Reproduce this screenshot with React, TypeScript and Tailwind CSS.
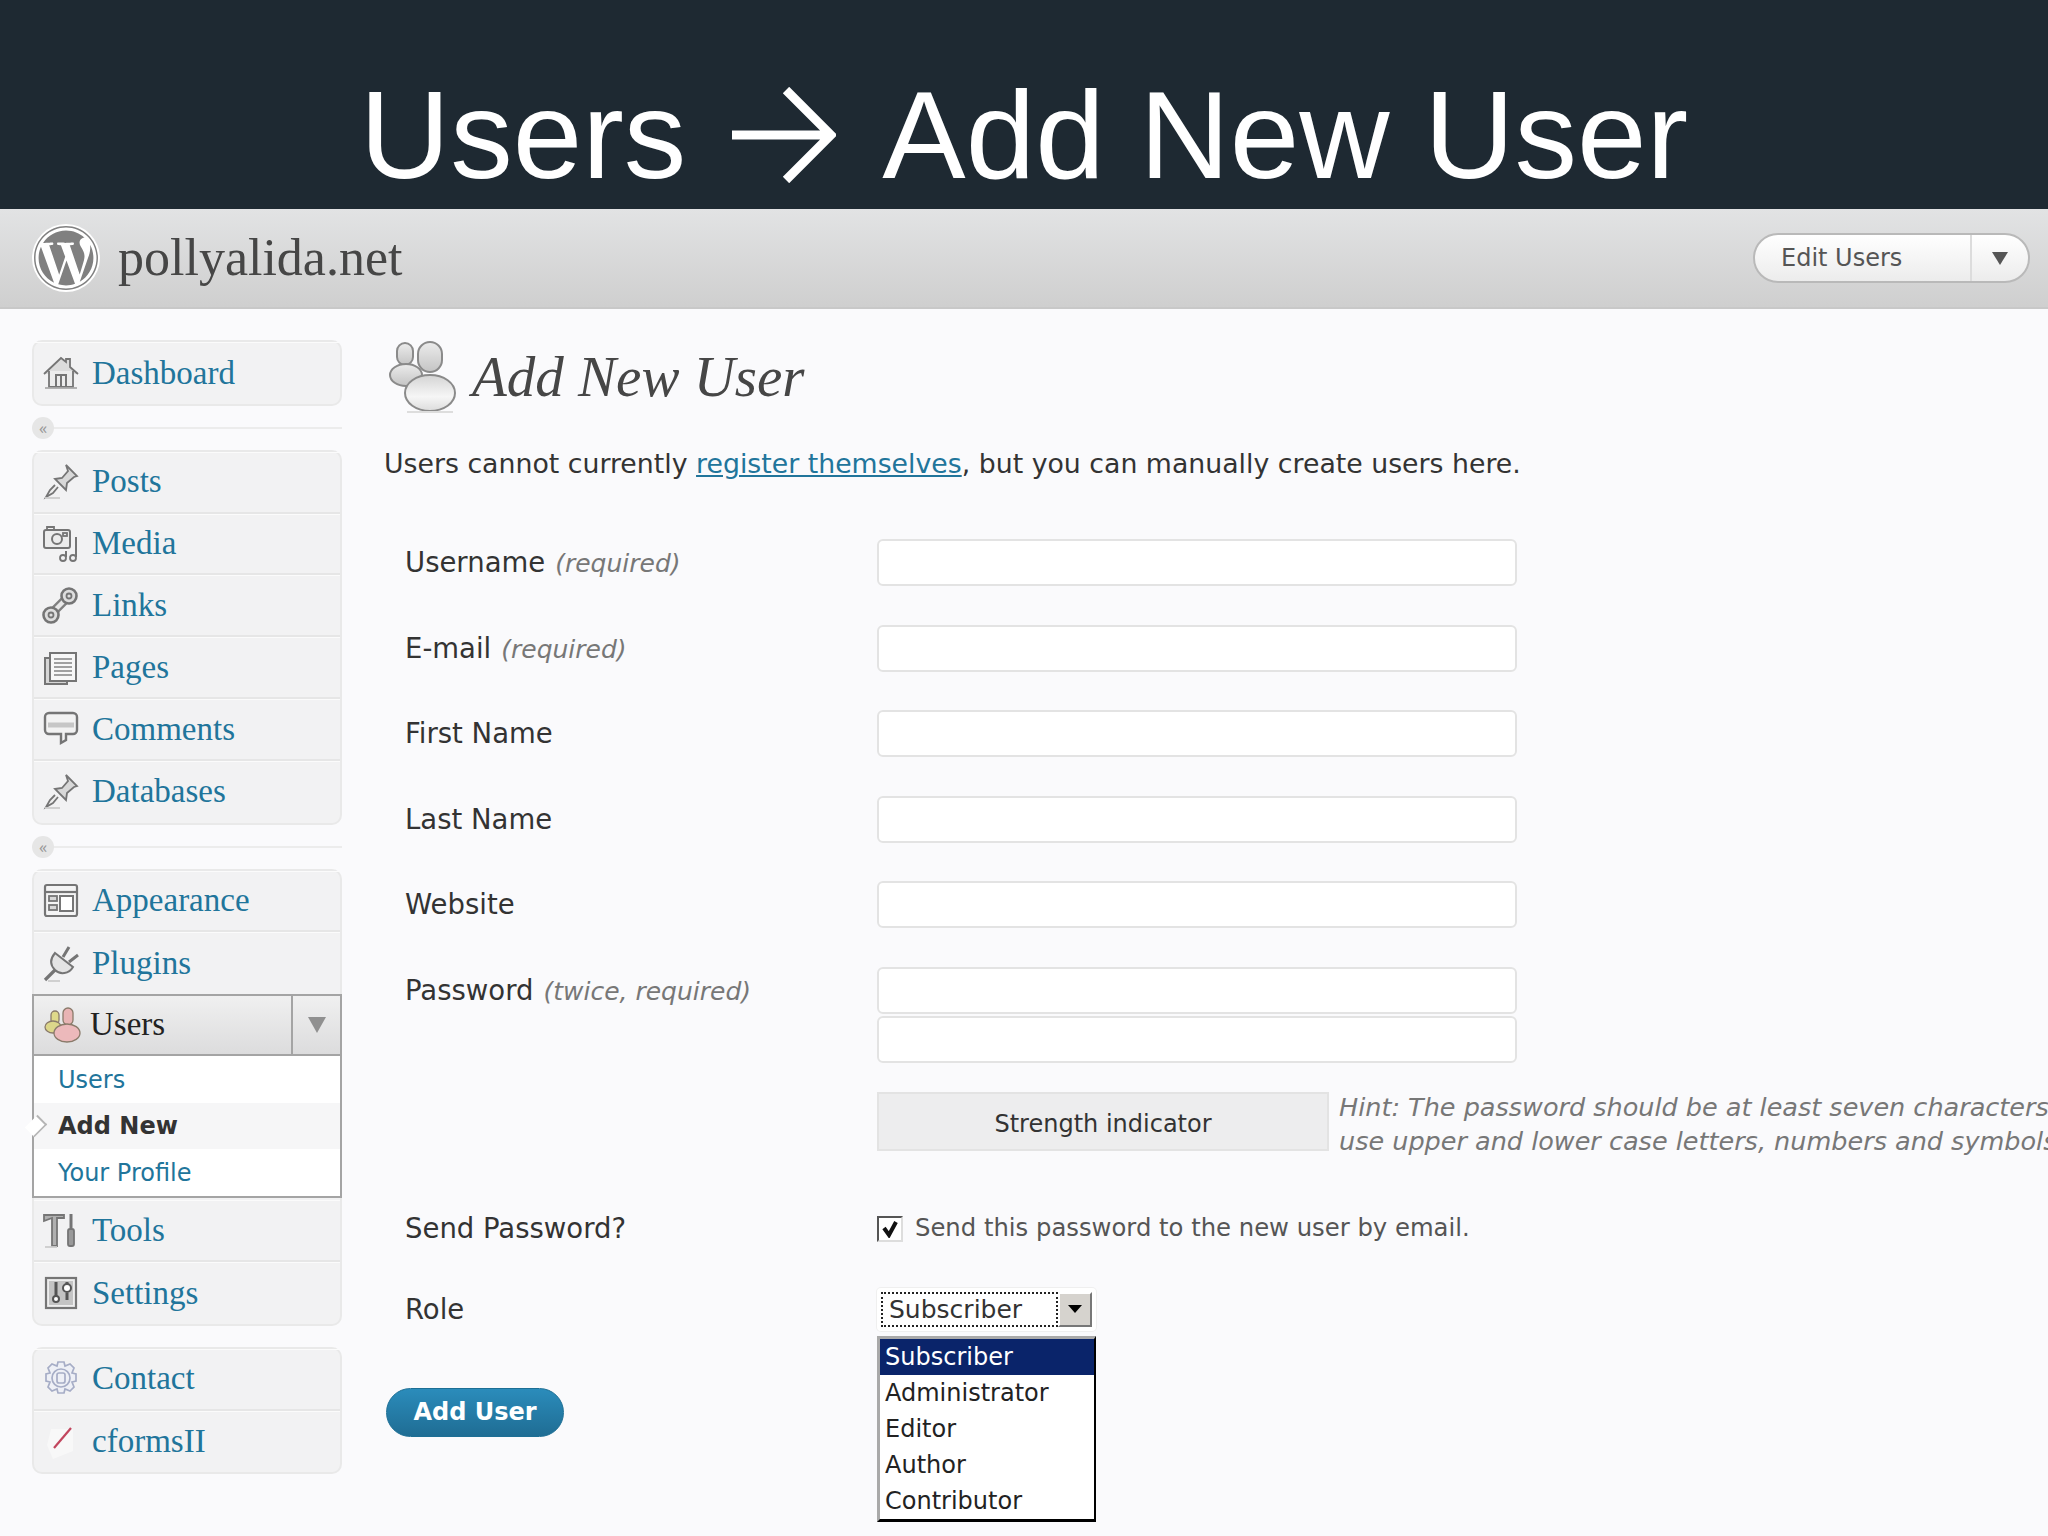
import { ReactNode } from 'react'
import { FaWordpress } from 'react-icons/fa'

const serif = "font-['Liberation_Serif',serif]"

// sidebar icons, all on a 38 box
function Ico({ children }: { children: ReactNode }) {
  return (
    <svg width="38" height="38" viewBox="0 0 38 38" fill="none" stroke="#757575" strokeWidth="1.8" className="shrink-0">
      {children}
    </svg>
  )
}

const HomeIco = () => (
  <Ico>
    <path d="M2 20 19 4l5 4V5h4v8l8 7" fill="#dcdcdc" />
    <path d="M7 17v16h24V17" fill="#ececec" />
    <path d="M14 33V21h10v12M19 21v12" strokeWidth="2" />
    <path d="M3 34h32" stroke="#aaa" />
  </Ico>
)
const PinIco = () => (
  <Ico>
    <path d="M24 2l11 11-3 1-7 6-1 7-11-11 7-1 6-7z" fill="#d8d8d8" />
    <path d="M16 24l-5 6-7 4 4-7 5-5" fill="#eee" />
    <path d="M3 35h15" stroke="#ccc" />
  </Ico>
)
const MediaIco = () => (
  <Ico>
    <rect x="2" y="5" width="26" height="18" rx="2" fill="#ececec" strokeWidth="2" />
    <path d="M5 5V2h7v3" />
    <circle cx="15" cy="14" r="5" strokeWidth="2" />
    <rect x="21" y="8" width="4" height="3" />
    <path d="M24 26v6M34 12v20" strokeWidth="2" />
    <circle cx="21" cy="33" r="3" />
    <circle cx="31" cy="33" r="3" />
  </Ico>
)
const LinkIco = () => (
  <Ico>
    <path d="M11 25 25 11" strokeWidth="9" stroke="#808080" />
    <path d="M11 25 25 11" strokeWidth="4.5" stroke="#e8e8e8" />
    <circle cx="27" cy="9" r="7.5" fill="#dedede" strokeWidth="2.6" />
    <circle cx="27" cy="9" r="2.5" />
    <circle cx="9" cy="28" r="7.5" fill="#dedede" strokeWidth="2.6" />
    <circle cx="9" cy="28" r="2.5" />
  </Ico>
)
const PagesIco = () => (
  <Ico>
    <rect x="3" y="9" width="22" height="26" fill="#d6d6d6" strokeWidth="2" />
    <rect x="8" y="4" width="26" height="28" fill="#f7f7f7" strokeWidth="2" />
    <path d="M12 10h18M12 14h18M12 18h18M12 22h18M12 26h18" stroke="#a0a0a0" />
  </Ico>
)
const CommentIco = () => (
  <Ico>
    <path d="M7 3h24a4 4 0 0 1 4 4v13a4 4 0 0 1-4 4h-7v6l-5 3v-9H7a4 4 0 0 1-4-4V7a4 4 0 0 1 4-4z" fill="#f2f2f2" strokeWidth="2.4" />
    <path d="M6 15h26" stroke="#c6c6c6" strokeWidth="5" />
  </Ico>
)
const AppearanceIco = () => (
  <Ico>
    <rect x="3" y="3" width="32" height="31" rx="2" fill="#f4f4f4" strokeWidth="2.2" />
    <path d="M3 10h32" strokeWidth="2.2" />
    <rect x="7" y="14" width="8" height="5" fill="#d8d8d8" />
    <rect x="7" y="23" width="8" height="5" fill="#d8d8d8" />
    <rect x="18" y="14" width="13" height="15" fill="#fff" strokeWidth="2" />
  </Ico>
)
const PluginIco = () => (
  <Ico>
    <path d="M13 8 31 22c-4 7-13 8-18 3S8 14 13 8z" fill="#e4e4e4" strokeWidth="2" />
    <path d="M21 12l6-10M27 17l9-7" strokeWidth="3" />
    <path d="M13 25 3 35" strokeWidth="3.2" />
    <path d="M6 36h12" stroke="#ccc" />
  </Ico>
)
const UsersIco = () => (
  <svg width="38" height="38" viewBox="0 0 38 38" className="shrink-0" stroke="#8a7a6a" strokeWidth="1.3">
    <rect x="7" y="5" width="8" height="13" rx="4" fill="#dfd98a" />
    <ellipse cx="9" cy="21" rx="8" ry="6" fill="#dcd68a" />
    <rect x="19" y="2" width="10" height="17" rx="5" fill="#e8b4b4" />
    <ellipse cx="23" cy="27" rx="13" ry="9" fill="#ecb9bb" />
  </svg>
)
const ToolsIco = () => (
  <Ico>
    <path d="M2 3h20v3H15v28H10V6L2 9z" fill="#b0b0b0" />
    <path d="M29 2v14" strokeWidth="3" />
    <rect x="26" y="17" width="6" height="17" rx="2" fill="#999" />
    <path d="M3 35h12" stroke="#ccc" />
  </Ico>
)
const SettingsIco = () => (
  <Ico>
    <rect x="4" y="4" width="30" height="30" fill="#eee" strokeWidth="2.2" />
    <rect x="7" y="7" width="24" height="24" fill="#c4c4c4" stroke="none" />
    <path d="M14 8v14M25 8v3M25 19v7" strokeWidth="3" stroke="#555" />
    <circle cx="14" cy="25" r="3" fill="#fff" stroke="#555" strokeWidth="2" />
    <circle cx="25" cy="14" r="4" fill="#fff" stroke="#555" strokeWidth="2" />
  </Ico>
)
const ContactIco = () => (
  <svg width="38" height="38" viewBox="0 0 38 38" fill="none" stroke="#a6adc6" strokeWidth="1.7" className="shrink-0">
    <path d="M16 2h6l1 4 5-2 4 4-2 5 4 1v7l-4 1 2 5-4 4-5-2-1 4h-6l-1-4-5 2-4-4 2-5-4-1v-7l4-1-2-5 4-4 5 2z" fill="#eef0f6" />
    <circle cx="19" cy="18" r="9" />
    <rect x="15" y="13" width="8" height="10" rx="2" />
  </svg>
)
const CformsIco = () => (
  <svg width="38" height="38" viewBox="0 0 38 38" fill="none" className="shrink-0">
    <path d="M9 6h22v22l-20 8-6-14z" fill="#f8f8f8" />
    <path d="M12 25 29 5" stroke="#c2465e" strokeWidth="2.2" />
  </svg>
)

function MenuRow({ icon, label, last }: { icon: ReactNode; label: string; last?: boolean }) {
  return (
    <div className={`flex h-[61.8px] items-center gap-[12px] pl-[8px] border-t border-t-[#fbfbfb] ${last ? '' : 'border-b-2 border-b-[#e6e6e6]'}`}>
      {icon}
      <span className={`${serif} text-[33px] text-[#21759b]`}>{label}</span>
    </div>
  )
}

function MenuGroup({ children }: { children: ReactNode }) {
  return <div className="rounded-[10px] border-2 border-[#e9e9e9] bg-[#f2f2f3]">{children}</div>
}

function Separator() {
  return (
    <div className="flex h-[44px] items-center">
      <div className="flex h-[22px] w-[22px] items-center justify-center rounded-full bg-[#e6e6e6] text-[16px] leading-none text-[#999]">«</div>
      <div className="h-[2px] flex-1 bg-[#ececec]" />
    </div>
  )
}

function Sidebar() {
  return (
    <aside className="ml-[32px] mt-[31px] w-[310px] shrink-0">
      <MenuGroup>
        <MenuRow icon={<HomeIco />} label="Dashboard" last />
      </MenuGroup>
      <Separator />
      <MenuGroup>
        <MenuRow icon={<PinIco />} label="Posts" />
        <MenuRow icon={<MediaIco />} label="Media" />
        <MenuRow icon={<LinkIco />} label="Links" />
        <MenuRow icon={<PagesIco />} label="Pages" />
        <MenuRow icon={<CommentIco />} label="Comments" />
        <MenuRow icon={<PinIco />} label="Databases" last />
      </MenuGroup>
      <Separator />
      <MenuGroup>
        <MenuRow icon={<AppearanceIco />} label="Appearance" />
        <MenuRow icon={<PluginIco />} label="Plugins" last />
        <div className="-mx-[2px] flex h-[62px] border-2 border-[#a4a4a4] bg-gradient-to-b from-[#f0f0f0] to-[#dcdcdd]">
          <div className="flex flex-1 items-center gap-[8px] border-r-2 border-r-[#a4a4a4] pl-[10px]">
            <UsersIco />
            <span className={`${serif} text-[33px] text-[#222]`}>Users</span>
          </div>
          <div className="flex w-[47px] items-center justify-center">
            <div className="h-0 w-0 border-x-[9px] border-t-[16px] border-x-transparent border-t-[#909090]" />
          </div>
        </div>
        <div className="-mx-[2px] border-x-2 border-b-2 border-[#a4a4a4] bg-white font-['DejaVu_Sans',sans-serif] text-[24px]">
          <div className="flex h-[47px] items-center pl-[24px] text-[#21759b]">Users</div>
          <div className="relative flex h-[46px] items-center bg-[#f6f6f7] pl-[24px] font-bold text-[#333]">
            Add New
            <div className="absolute -left-[7px] top-[14px] h-[18px] w-[18px] rotate-45 scale-x-75 border-r-2 border-t-2 border-[#b5b5b5] bg-white" />
          </div>
          <div className="flex h-[47px] items-center pl-[24px] text-[#21759b]">Your Profile</div>
        </div>
        <div className="h-[2px]" />
        <MenuRow icon={<ToolsIco />} label="Tools" />
        <MenuRow icon={<SettingsIco />} label="Settings" last />
      </MenuGroup>
      <div className="h-[21px]" />
      <MenuGroup>
        <MenuRow icon={<ContactIco />} label="Contact" />
        <MenuRow icon={<CformsIco />} label="cformsII" last />
      </MenuGroup>
    </aside>
  )
}

function TextInput() {
  return <div className="h-[47px] w-[640px] rounded-[6px] border-2 border-[#e3e3e3] bg-white" />
}

function FormRow({ label, note, children }: { label: string; note?: string; children: ReactNode }) {
  return (
    <div className="flex h-[85.5px] items-center">
      <div className="w-[472px] shrink-0 text-[27.5px] text-[#333]">
        {label}
        {note && <i className="ml-[10px] text-[25px] text-[#777]">{note}</i>}
      </div>
      {children}
    </div>
  )
}

function BigUsersIcon() {
  return (
    <svg width="72" height="72" viewBox="0 0 72 72" className="shrink-0" stroke="#8a8a8a" strokeWidth="2">
      <defs>
        <linearGradient id="headShade" x1="0" y1="0" x2="0" y2="1">
          <stop offset="0" stopColor="#ececec" />
          <stop offset="1" stopColor="#c4c4c4" />
        </linearGradient>
        <linearGradient id="bodyShade" x1="0" y1="0" x2="0" y2="1">
          <stop offset="0" stopColor="#d4d4d4" />
          <stop offset="0.6" stopColor="#f6f6f6" />
          <stop offset="1" stopColor="#dcdcdc" />
        </linearGradient>
      </defs>
      <rect x="10" y="2" width="16" height="22" rx="8" fill="url(#headShade)" />
      <ellipse cx="19" cy="34" rx="16" ry="11" fill="url(#headShade)" />
      <rect x="31" y="1" width="24" height="30" rx="12" fill="url(#headShade)" />
      <ellipse cx="43" cy="52" rx="25" ry="18" fill="url(#bodyShade)" />
      <path d="M20 71h46" stroke="#ddd" />
    </svg>
  )
}

function RoleSelect() {
  return (
    <div className="relative w-[219px]">
      <div className="flex h-[43px] items-center rounded-[4px] bg-white px-[4px] py-[4px] shadow-[0_0_0_1px_#efefef]">
        <div className="flex h-full flex-1 items-center border-2 border-dotted border-[#222] pl-[6px] text-[25px] text-[#333]">Subscriber</div>
        <div className="flex h-[35px] w-[34px] items-center justify-center border-2 border-b-[#777] border-l-white border-r-[#777] border-t-white bg-[#d6d3ce]">
          <div className="h-0 w-0 border-x-[7px] border-t-[8px] border-x-transparent border-t-black" />
        </div>
      </div>
      <div className="absolute left-0 top-[48px] w-[219px] border-b-[3px] border-l-[3px] border-r-2 border-t-[3px] border-b-black border-l-[#a9a9a9] border-r-black border-t-[#a9a9a9] bg-white text-[24px] leading-[36px] text-[#222]">
        <div className="bg-[#0a246a] pl-[5px] text-white">Subscriber</div>
        <div className="pl-[5px]">Administrator</div>
        <div className="pl-[5px]">Editor</div>
        <div className="pl-[5px]">Author</div>
        <div className="pl-[5px]">Contributor</div>
      </div>
    </div>
  )
}

function Content() {
  return (
    <main className="ml-[42px] min-w-0 flex-1 font-['DejaVu_Sans',sans-serif]">
      <div className="mt-[32px] flex items-center gap-[13px] pl-[3px]">
        <BigUsersIcon />
        <h1 className={`${serif} text-[57px] italic leading-[72px] text-[#464646]`}>Add New User</h1>
      </div>
      <p className="mt-[32px] whitespace-nowrap text-[26.75px] leading-[38px] text-[#333]">
        Users cannot currently <a className="text-[#21759b] underline">register themselves</a>, but you can manually create users here.
      </p>
      <div className="mt-[37px] pl-[21px]">
        <FormRow label="Username" note="(required)"><TextInput /></FormRow>
        <FormRow label="E-mail" note="(required)"><TextInput /></FormRow>
        <FormRow label="First Name"><TextInput /></FormRow>
        <FormRow label="Last Name"><TextInput /></FormRow>
        <FormRow label="Website"><TextInput /></FormRow>
        <FormRow label="Password" note="(twice, required)"><TextInput /></FormRow>
        <div className="-mt-[17px] pl-[472px]">
          <TextInput />
          <div className="mt-[21px] flex items-center gap-[10px]">
            <div className="flex h-[59px] w-[452px] shrink-0 items-center justify-center border-2 border-[#e3e3e3] bg-[#ededee] pt-[6px] text-[24px] text-[#333]">
              Strength indicator
            </div>
            <p className="whitespace-nowrap pt-[6px] text-[25.5px] italic leading-[34px] text-[#777]">
              Hint: The password should be at least seven characters long. To make it stronger,
              <br />
              use upper and lower case letters, numbers and symbols like ! " ? $ % ^ &amp; ).
            </p>
          </div>
        </div>
        <div className="mt-[28.5px] flex h-[84px] items-center">
          <div className="w-[472px] shrink-0 text-[27.5px] text-[#333]">Send Password?</div>
          <div className="flex h-[26px] w-[26px] items-center justify-center border-2 border-b-[#ddd] border-l-[#555] border-r-[#ddd] border-t-[#555] bg-white text-[#111]">
            <svg width="18" height="18" viewBox="0 0 18 18" fill="none" stroke="#111" strokeWidth="4">
              <path d="M3 8l5 7 7-13" />
            </svg>
          </div>
          <span className="ml-[12px] text-[24.3px] text-[#555]">Send this password to the new user by email.</span>
        </div>
        <div className="-mt-[4px]">
          <FormRow label="Role"><RoleSelect /></FormRow>
        </div>
      </div>
      <button className="mt-[35.5px] ml-[2px] h-[49px] w-[178px] rounded-full border border-[#1d6f95] bg-gradient-to-b from-[#2b8cbb] to-[#1f6d94] text-[24px] font-bold text-white">
        Add User
      </button>
    </main>
  )
}

export default function App() {
  return (
    <div className="flex h-[1536px] w-[2048px] flex-col overflow-hidden bg-[#fafafc]">
      <div className="flex h-[209px] shrink-0 items-end justify-center bg-[#1e2932] font-['Liberation_Sans',sans-serif] text-[125px] leading-[148px] text-white">
        <span>Users</span>
        <svg width="104" height="96" viewBox="0 0 104 96" fill="none" stroke="white" strokeWidth="9" className="mx-[46px] mb-[26px]">
          <path d="M0 48H98M54 3l45 45-45 45" />
        </svg>
        <span>Add New User</span>
      </div>
      <header className="flex h-[100px] shrink-0 items-center border-b-2 border-b-[#c8c8c8] bg-gradient-to-b from-[#e2e3e4] to-[#cfcfcf] pl-[32px] pr-[18px]">
        <div className="flex h-[68px] w-[68px] items-center justify-center rounded-full bg-white">
          <FaWordpress size={66} color="#808080" />
        </div>
        <div className={`${serif} ml-[18px] text-[52px] leading-none text-[#464646]`}>pollyalida.net</div>
        <div className="ml-auto flex h-[50px] w-[277px] overflow-hidden rounded-full border-2 border-[#b9b9b9] bg-gradient-to-b from-white to-[#ececec] font-['DejaVu_Sans',sans-serif] text-[24px] text-[#555]">
          <div className="flex flex-1 items-center border-r-2 border-r-[#dcdcdc] pl-[26px]">Edit Users</div>
          <div className="flex w-[56px] items-center justify-center">
            <div className="h-0 w-0 border-x-[8px] border-t-[13px] border-x-transparent border-t-[#555]" />
          </div>
        </div>
      </header>
      <div className="flex min-h-0 flex-1">
        <Sidebar />
        <Content />
      </div>
    </div>
  )
}
